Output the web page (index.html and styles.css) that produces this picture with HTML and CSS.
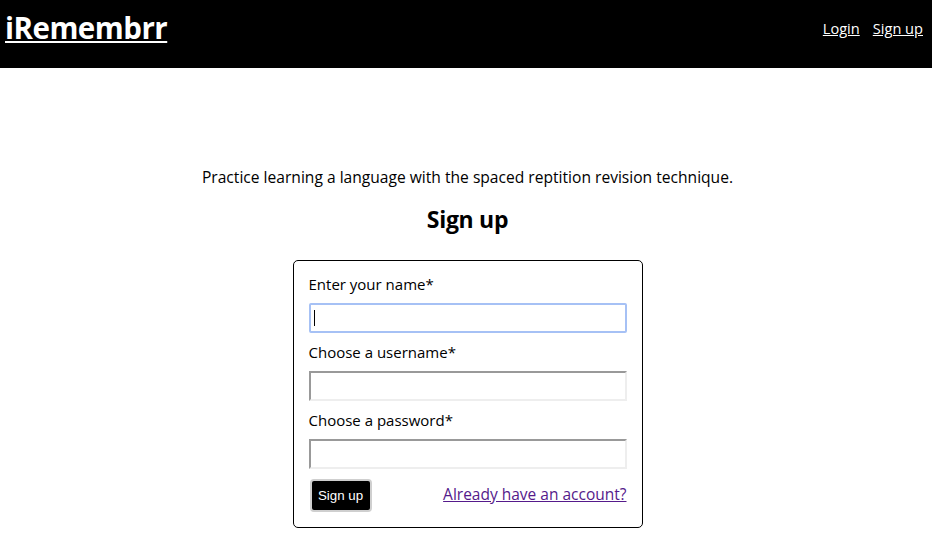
FILE: index.html
```html
<!DOCTYPE html>
<html>
<head>
<meta charset="utf-8">
<link rel="stylesheet" href="styles.css">
</head>
<body>
<header class="topbar">
  <a class="logo" href="#">iRemembrr</a>
  <nav class="nav">
    <a href="#">Login</a>
    <a href="#">Sign up</a>
  </nav>
</header>
<main class="main">
  <p class="tagline">Practice learning a language with the spaced reptition revision technique.</p>
  <h1 class="title">Sign up</h1>
  <form class="card">
    <label class="label" for="name">Enter your name*</label>
    <div class="field focused"><span class="caret"></span></div>
    <label class="label" for="user">Choose a username*</label>
    <input class="field" id="user" type="text">
    <label class="label" for="pass">Choose a password*</label>
    <input class="field" id="pass" type="password">
    <div class="actions">
      <button class="btn" type="button">Sign up</button>
      <a class="already" href="#">Already have an account?</a>
    </div>
  </form>
</main>
</body>
</html>
```
FILE: styles.css
```css
html, body {
  margin: 0;
  padding: 0;
  background: #fff;
  font-family: "Open Sans", "DejaVu Sans", sans-serif;
  color: #000;
}
.topbar {
  height: 68px;
  background: #000;
  display: flex;
  justify-content: space-between;
  align-items: flex-start;
  padding: 0 9px 0 5px;
}
.logo {
  color: #fff;
  font-size: 29.5px;
  font-weight: 700;
  line-height: 1;
  margin-top: 13px;
  letter-spacing: -0.5px;
}
.nav {
  display: flex;
  gap: 13px;
  margin-top: 19px;
}
.nav a {
  color: #fff;
  font-size: 14.6px;
  line-height: 18px;
}
.main {
  display: flex;
  flex-direction: column;
  align-items: center;
  padding-top: 99px;
  padding-left: 3px;
}
.tagline {
  margin: 0;
  font-size: 15.6px;
  line-height: 20px;
}
.title {
  margin: 17px 0 0;
  font-size: 23px;
  line-height: 30px;
  font-weight: 700;
  letter-spacing: -0.3px;
}
.card {
  margin-top: 26px;
  width: 318px;
  border: 1px solid #000;
  border-radius: 5px;
  padding: 13px 15px 15px 15px;
  display: flex;
  flex-direction: column;
}
.label {
  font-size: 15px;
  line-height: 20px;
  margin-bottom: 9px;
}
.field {
  box-sizing: border-box;
  width: 318px;
  height: 30px;
  margin: 0 0 9px;
  border-style: solid;
  border-width: 2px;
  border-color: #999 #eee #eee #999;
  background: #fff;
  padding: 1px 2px;
  font-size: 14px;
  outline: none;
}
.field.focused {
  border: 2px solid #a6c1f5;
  border-radius: 2px;
  display: flex;
  align-items: center;
}
.caret {
  width: 1px;
  height: 16px;
  background: #000;
  margin-left: 1px;
}
.actions {
  display: flex;
  justify-content: space-between;
  align-items: center;
  margin-top: 1px;
}
.btn {
  box-sizing: border-box;
  background: #000;
  color: #fff;
  font-family: "Liberation Sans", Arial, sans-serif;
  font-size: 13.33px;
  height: 33px;
  width: 62px;
  margin-left: 1px;
  padding: 0;
  border: 2px solid #cfcfcf;
  border-radius: 4px;
}
.already {
  color: #551a8b;
  font-size: 15.5px;
  line-height: 18px;
  margin-bottom: 3px;
}
```
